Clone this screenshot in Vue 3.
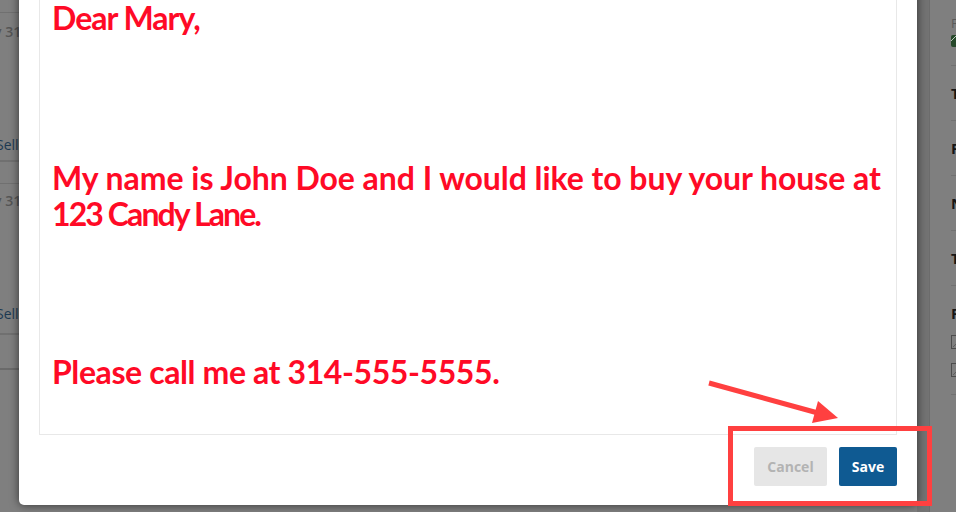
<script setup>
const rows = [
  { date: 'May 31', link: 'Seller' },
  { date: 'May 31', link: 'Seller' },
]
const fields = ['T', 'F', 'N', 'T']
</script>

<template>
  <div class="page">
    <aside class="list">
      <div v-for="(row, i) in rows" :key="i" class="row">
        <span class="date">{{ row.date }}</span>
        <span class="link">{{ row.link }}</span>
      </div>
    </aside>

    <main class="modal">
      <div class="letter">
        <p class="greet">Dear Mary,</p>
        <p class="body">
          <span class="line-a">My name is John Doe and I would like to buy your house at</span>
          <span class="line-b">123 Candy Lane.</span>
        </p>
        <p class="call">Please call me at 314-555-5555.</p>
      </div>
      <footer class="actions">
        <button class="btn cancel" type="button">Cancel</button>
        <button class="btn save" type="button">Save</button>
      </footer>
    </main>

    <div class="gutter"></div>

    <aside class="side">
      <div class="status">
        <span class="status-label">Form</span>
        <span class="badge">
          <svg viewBox="0 0 20 12" width="20" height="12"><path d="M0 6 L5 1" stroke="#b9c9ba" stroke-width="1" fill="none" /></svg>
        </span>
      </div>
      <div v-for="(f, i) in fields" :key="i" class="field">{{ f }}</div>
      <div class="field checks">
        <span class="check-title">F</span>
        <span v-for="n in 2" :key="n" class="box">
          <svg viewBox="0 0 12 12" width="12" height="12"><path d="M1 11 L5 7" stroke="#5f5f5f" stroke-width="1" fill="none" /></svg>
        </span>
      </div>
    </aside>

    <svg class="callout" viewBox="0 0 956 512" width="956" height="512">
      <path d="M709 383 L818 413" stroke="#ff4040" stroke-width="5" fill="none" />
      <path d="M818 401 L838 418 L812 423 Z" fill="#ff4040" />
      <rect x="730.5" y="428.5" width="199" height="75" fill="none" stroke="#ff4040" stroke-width="5" />
    </svg>
  </div>
</template>

<style>
html, body { margin: 0; background: #7f7f7f; }
</style>

<style scoped>
.page {
  position: relative;
  display: flex;
  width: 956px;
  height: 512px;
  overflow: hidden;
  background: #7f7f7f;
  font-family: "Open Sans", sans-serif;
}
.list {
  flex: 0 0 19px;
  width: 19px;
  height: 358px;
  margin-top: 12px;
  overflow: hidden;
  border-bottom: 2px solid #6a6a6a;
  box-sizing: border-box;
}
.row {
  display: flex;
  flex-direction: column;
  align-items: flex-start;
  height: 150px;
  margin-bottom: 21px;
  border-top: 1px solid #707070;
  border-bottom: 2px solid #707070;
  padding-top: 10px;
  box-sizing: border-box;
  white-space: nowrap;
  font-size: 14px;
  line-height: 18px;
}
.row:nth-child(2) { height: 152px; padding-top: 8px; }
.date { color: #555; font-weight: 600; margin-left: -27px; }
.link { color: #1d3a52; margin-top: 95px; margin-left: -4px; }
.modal {
  position: relative;
  flex: 0 0 898px;
  display: flex;
  flex-direction: column;
  box-sizing: border-box;
  height: 516px;
  margin-top: -11px;
  padding: 0 20px;
  background: #fff;
  border-radius: 0 0 5px 5px;
  box-shadow: 0 0 10px rgba(0, 0, 0, 0.6);
}
.letter {
  box-sizing: border-box;
  height: 446px;
  padding: 11px 12px 0;
  border: 1px solid #e8e8e8;
  border-top: 0;
  color: #ff0a26;
  font-family: Lato, sans-serif;
  font-weight: 700;
  font-size: 32px;
  line-height: 36px;
}
.letter p { margin: 0; white-space: nowrap; }
.greet { letter-spacing: -1px; }
.letter .body { margin-top: 124px; }
.body span { display: block; }
.line-a { letter-spacing: -0.05px; }
.line-b { letter-spacing: -1.9px; }
.letter .call { margin-top: 122px; letter-spacing: -0.4px; }
.actions {
  display: flex;
  justify-content: flex-end;
  gap: 12px;
  padding-top: 12px;
}
.btn {
  height: 39px;
  border: 0;
  border-radius: 2px;
  padding: 0;
  font-family: "Open Sans", sans-serif;
  font-size: 14px;
  font-weight: 700;
}
.cancel { width: 73px; background: #e6e6e6; color: #b3b3b3; }
.save { width: 58px; background: #0f5a92; color: #fff; }
.gutter {
  flex: 0 0 13px;
  background: #737373;
  border-right: 1px solid #6c6c6c;
  box-sizing: border-box;
}
.side {
  flex: 1;
  padding-left: 21px;
  overflow: hidden;
  white-space: nowrap;
}
.status { height: 66px; box-sizing: border-box; padding-top: 14px; border-bottom: 1px solid #717171; }
.status-label { display: block; color: #5a5a5a; font-size: 13px; line-height: 18px; }
.badge { display: block; width: 20px; height: 12px; margin-top: 3px; background: #27492b; border-radius: 2px; overflow: hidden; }
.badge svg, .box svg { display: block; }
.field {
  box-sizing: border-box;
  height: 55px;
  padding-top: 18px;
  border-bottom: 1px solid #717171;
  color: #161616;
  font-size: 15px;
  font-weight: 700;
  line-height: 18px;
}
.checks { height: 109px; }
.check-title { display: block; margin-bottom: 13px; }
.box {
  display: block;
  width: 12px;
  height: 12px;
  margin-bottom: 14px;
  border: 1px solid #4d4d4d;
}
.callout { position: absolute; left: 0; top: 0; pointer-events: none; }
</style>
